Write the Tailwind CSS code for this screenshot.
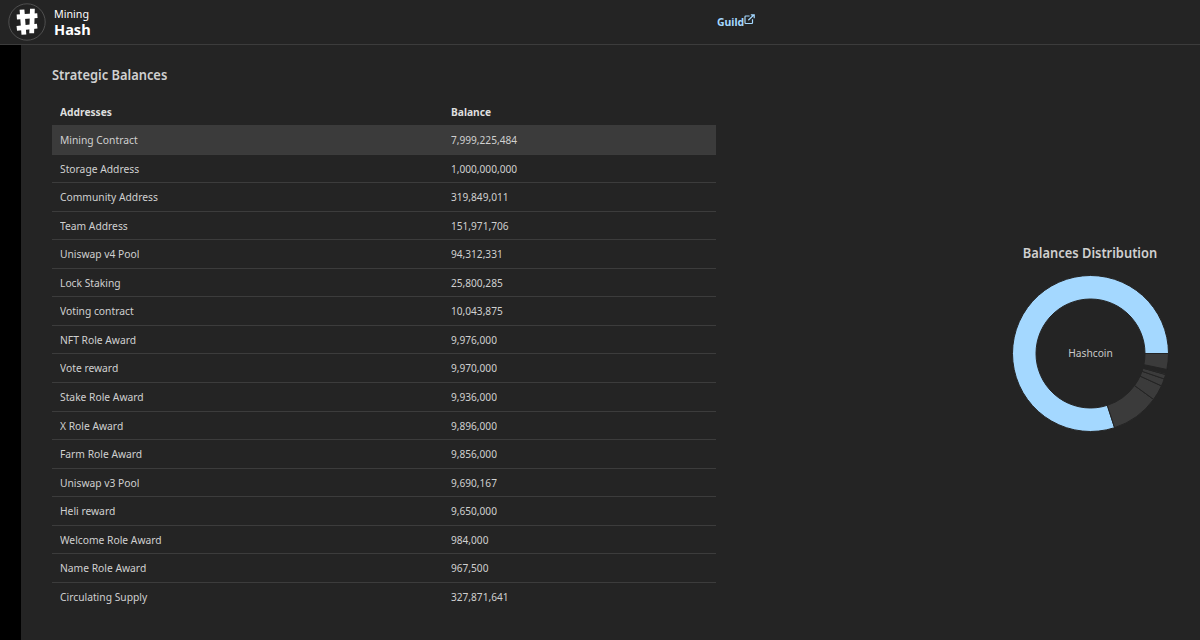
<!DOCTYPE html>
<html lang="en">
  <head>
    <meta charset="UTF-8" />
    <meta name="viewport" content="width=device-width, initial-scale=1.0" />
    <title>Mining Hash - Strategic Balances</title>
    <script src="https://cdn.jsdelivr.net/npm/@tailwindcss/browser@4"></script>
  </head>
  <body class="flex h-screen flex-col overflow-hidden bg-[#242424] font-['Noto_Sans','Open_Sans',sans-serif] text-[11px] text-[#d0d0d0]">
    <header class="flex h-[45px] shrink-0 items-center border-b border-[#3c3c3c] pl-2">
      <div class="flex w-[709px] items-center gap-2">
        <svg class="size-[38px] shrink-0" viewBox="0 0 38 38">
          <circle cx="19" cy="19" r="18.2" fill="#222" stroke="#5c5c5c" stroke-width="0.8" />
          <g fill="none" stroke="#fff" stroke-width="4.8">
            <path d="M14 6.6L15.9 31.6M24.4 5.8L23.7 30.2" />
            <path d="M8.8 14L29.4 12.6M8.8 25.4L29.2 23.2" />
          </g>
        </svg>
        <div class="text-white">
          <p class="origin-left scale-x-[.93] text-[11.5px] leading-[14px]">Mining</p>
          <p class="origin-left scale-x-[.97] text-[15px] leading-[17px] font-bold">Hash</p>
        </div>
      </div>
      <a href="#" class="flex items-start text-[11px] leading-4 font-bold text-[#a4d8ff]">
        <span class="w-[27px]"><span class="inline-block origin-left scale-x-[.95]">Guild</span></span>
        <svg class="size-[11px]" viewBox="0 0 11 11" fill="none" stroke="currentColor" stroke-width="1.2">
          <path d="M5.6 2H1.7Q1 2 1 2.7V8.8Q1 9.5 1.7 9.5H7.8Q8.5 9.5 8.5 8.8V5.2" />
          <path d="M4.3 6.3L10 .8M6.8 .8H10.2V4.2" />
        </svg>
      </a>
    </header>

    <main class="flex min-h-0 flex-1">
      <div class="w-[21px] shrink-0 bg-black"></div>

      <section class="ml-[31px] w-[664px] shrink-0 pt-5">
        <h2 class="origin-left scale-x-[.92] text-[14px] leading-5 font-semibold">Strategic Balances</h2>
        <div class="mt-[14px] flex h-[26px] items-center px-2 font-bold text-[#dedede]">
          <span class="w-[391px]"><span class="inline-block origin-left scale-x-[.93]">Addresses</span></span>
          <span class="inline-block origin-left scale-x-[.93]">Balance</span>
        </div>
        <div id="balance-rows"></div>
      </section>

      <aside class="ml-auto flex w-[220px] flex-col items-center pt-[198px]">
        <h2 class="scale-x-[.92] text-[14px] leading-5 font-semibold whitespace-nowrap">Balances Distribution</h2>
        <svg class="mt-[12px] size-[157px]" viewBox="-78.5 -78.5 157 157">
          <g id="slices" stroke="#242424" stroke-width="1"></g>
          <text y="3.5" text-anchor="middle" font-size="11" textLength="44.5" lengthAdjust="spacingAndGlyphs" fill="#c8c8c8">Hashcoin</text>
        </svg>
      </aside>
    </main>

    <script>
      const balances = [
        ["Mining Contract", 7999225484],
        ["Storage Address", 1000000000],
        ["Community Address", 319849011],
        ["Team Address", 151971706],
        ["Uniswap v4 Pool", 94312331],
        ["Lock Staking", 25800285],
        ["Voting contract", 10043875],
        ["NFT Role Award", 9976000],
        ["Vote reward", 9970000],
        ["Stake Role Award", 9936000],
        ["X Role Award", 9896000],
        ["Farm Role Award", 9856000],
        ["Uniswap v3 Pool", 9690167],
        ["Heli reward", 9650000],
        ["Welcome Role Award", 984000],
        ["Name Role Award", 967500],
        ["Circulating Supply", 327871641],
      ];

      // Table rows, the first one is highlighted
      const rows = document.getElementById("balance-rows");
      balances.forEach(([name, value], i) => {
        const row = document.createElement("div");
        row.className = i === 0
          ? "flex h-[29.6px] items-center border-b border-[#3c3c3c] bg-[#3b3b3b] px-2 pt-px"
          : "flex h-[28.55px] items-center border-b border-[#3c3c3c] px-2 pt-px last:border-b-0 last:pt-0";
        row.innerHTML = `
          <span class="w-[391px]"><span class="inline-block origin-left scale-x-[.935]">${name}</span></span>
          <span class="inline-block origin-left scale-x-[.92]">${value.toLocaleString("en-US")}</span>
        `;
        rows.appendChild(row);
      });

      // Donut slices, counterclockwise from three o'clock
      const total = balances.reduce((sum, [, value]) => sum + value, 0);
      const point = (r, a) => `${r * Math.cos(a)} ${-r * Math.sin(a)}`;
      let angle = 0;
      let paths = "";
      balances.forEach(([, value], i) => {
        const end = angle + (value / total) * Math.PI * 2;
        const large = end - angle > Math.PI ? 1 : 0;
        paths += `<path fill="${i === 0 ? "#a4d8ff" : "#3b3b3b"}" d="M${point(78, angle)}A78 78 0 ${large} 0 ${point(78, end)}L${point(54.5, end)}A54.5 54.5 0 ${large} 1 ${point(54.5, angle)}Z" />`;
        angle = end;
      });
      document.getElementById("slices").innerHTML = paths;
    </script>
  </body>
</html>
